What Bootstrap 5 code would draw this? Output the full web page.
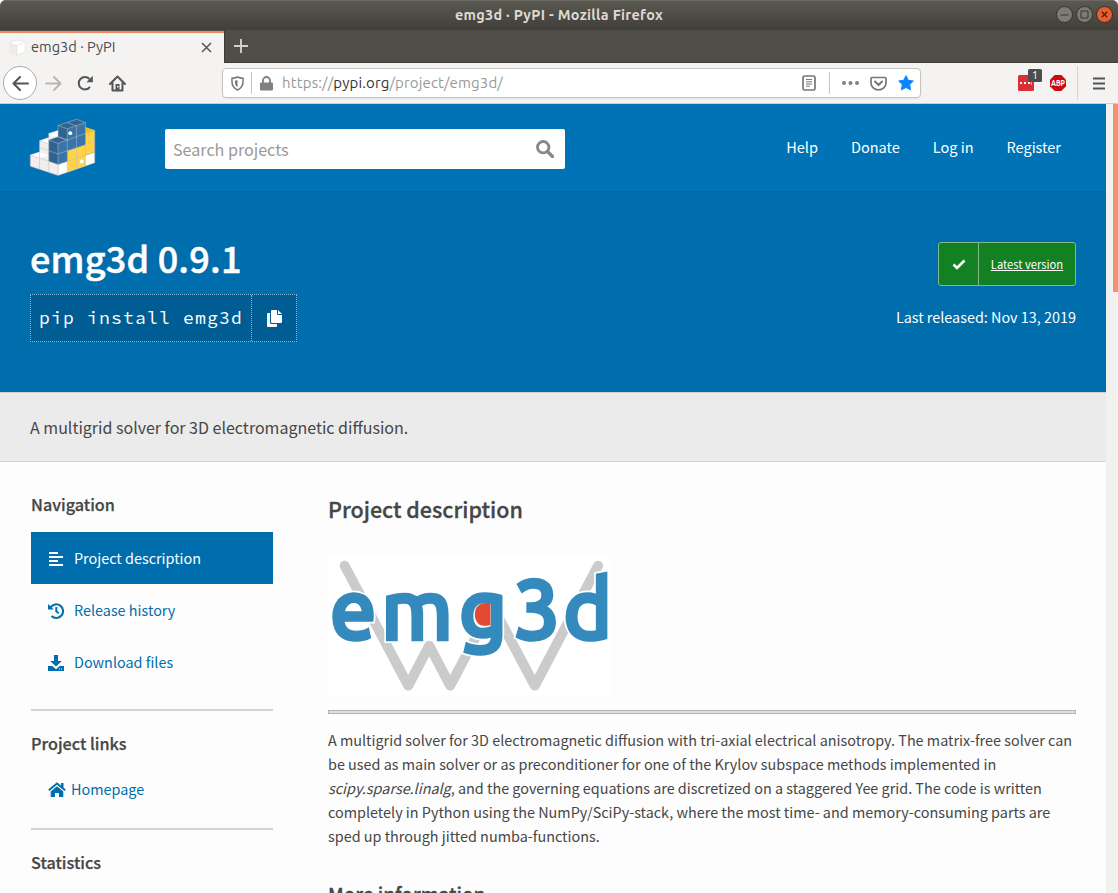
<!DOCTYPE html>
<html lang="en">
<head>
<meta charset="utf-8">
<title>emg3d · PyPI</title>
<meta name="viewport" content="width=device-width, initial-scale=1">
<link href="https://cdn.jsdelivr.net/npm/bootstrap@5.3.0/dist/css/bootstrap.min.css" rel="stylesheet">
<style>
html,body{height:893px;overflow:hidden}
body{width:1118px;background:#fdfdfd;color:#464646;font-family:"Source Sans Pro","Noto Sans CJK SC",sans-serif;font-size:14.4px;line-height:24px}
svg{display:block;flex:none}
a{text-decoration:none}
.chrome{font-family:Ubuntu,"Noto Sans","Open Sans",sans-serif}
.titlebar{height:30px;background:linear-gradient(#5b5a52,#3f3e39);color:#dfdbd2;font-size:14.4px;letter-spacing:.3px;font-weight:700;border-radius:6px 6px 0 0;box-shadow:inset 0 1px #6a685f}
.winbtns{right:5px;top:6px;gap:3px}
.tabs{height:33px;background:#504d46;border-bottom:1px solid #3a3934}
.browser-tab{width:224px;height:33px;background:#f4f3f2;border-top:2px solid #f0885f;margin-top:1px;padding:0 0 2px 9px;color:#4c4c4c;font-size:14.6px}
.newtab{border-left:1px solid #3a3934;padding-left:9px}
.tools{height:41px;background:#f4f3f2;border-bottom:1px solid #d0cecb}
.backbtn{width:34px;height:34px;border:1px solid #adaba8;border-radius:50%;background:#fff;margin-left:3px}
.urlbar{width:699px;height:30px;border:1px solid #c6c3bf;border-radius:4px;background:#fff;margin-left:96px;color:#999;font-size:15px;letter-spacing:.13px;box-shadow:0 1px 2px #0001}
.urlbar b{font-weight:400;color:#333}
.vline{width:1px;height:22px;background:#c4c4c4}
.viewport{height:789px}
.page{width:1106px;overflow:hidden}
.scroller{width:12px;background:#f1f1f0}
.thumb{width:5px;height:188px;background:#f19170;border-radius:0 0 0 1px}
.site-head{height:88px;background:#0073b7;border-bottom:1px solid #0069a6;padding-left:29px}
.searchbox{width:400px;height:40px;background:#fff;border-radius:2px;margin:2px 0 0 69px;padding:0 11px 0 8px;color:#999;font-size:16.1px}
.site-links a{color:#fff}
.site-links{margin:0 45px 2px 0;gap:33px;font-size:14.5px}
.banner{height:200px;background:#006dad;color:#fff;padding:0 30px}
.banner h1{font-size:36px;line-height:44px;font-weight:500;letter-spacing:.2px;-webkit-text-stroke:.5px #fff;margin:43px 0 15px}
.pip{width:267px;height:48px;border:1px dotted #8ab8d6;background:#005d94;font-family:"Source Code Pro","DejaVu Sans Mono",monospace;font-size:18px;letter-spacing:1.2px}
.pip-text{width:221px;border-right:1px dotted #8ab8d6;padding-left:8px}
.latest{width:138px;height:44px;background:#148024;border:1px solid #7fba88;border-radius:3px;margin-top:50px;font-size:11.2px}
.latest span{width:40px;border-right:1px solid #7fba88}
.latest a{color:#fff;text-decoration:underline}
.released{margin-top:19px}
.summary{height:70px;background:#ebebeb;border-top:1px solid #d3d3d3;border-bottom:1px solid #d3d3d3;padding:0 30px;font-size:16px}
.side{width:242px;margin-left:31px}
.side h6{font-size:16.2px;line-height:24px;font-weight:500;margin:0;-webkit-text-stroke:.25px #464646}
.side a{color:#006dad}
.side a svg{margin-top:2px}
.side .tabitem{height:52px;padding:0 0 1px 17px;gap:10px}
.side .tabitem.active{background:#006dad;color:#fff}
.rule{height:2px;background:#d3d3d3}
.main{width:748px;margin-left:55px}
.main h2{font-size:21.5px;line-height:28px;font-weight:500;margin:33px 0 33px;-webkit-text-stroke:.3px #464646}
.dbl{height:4px;border:1px solid #b3b3b3;background:#e0e0e0;margin:14px 0 14px}
</style>
</head>
<body>
<div class="chrome">
  <div class="titlebar position-relative d-flex align-items-center justify-content-center">emg3d · PyPI - Mozilla Firefox
    <div class="winbtns position-absolute d-flex">
      <svg width="17" height="17" viewBox="0 0 17 17"><circle cx="8.5" cy="8.5" r="8" fill="#7d7b74" stroke="#34332f"/><path d="M4.5 9h8" stroke="#383731"/></svg>
      <svg width="17" height="17" viewBox="0 0 17 17"><circle cx="8.5" cy="8.5" r="8" fill="#7d7b74" stroke="#34332f"/><path d="M5 5h7v7H5z" fill="none" stroke="#383731"/></svg>
      <svg width="17" height="17" viewBox="0 0 17 17"><circle cx="8.5" cy="8.5" r="8" fill="#e95e30" stroke="#3f2a22"/><path d="M5.8 5.8l5.4 5.4M11.2 5.8l-5.4 5.4" stroke="#4b2112" stroke-width="1.3"/></svg>
    </div>
  </div>
  <div class="tabs d-flex">
    <div class="browser-tab d-flex align-items-center">
      <svg width="16" height="17" viewBox="0 0 16 17"><path d="M0 4l8-3 8 2v10l-8 3-8-3z" fill="#fff" stroke="#e4e3e0" stroke-width=".7"/><path d="M0 4l8 2.500v9.500l-8-3z" fill="#edecea"/><path d="M0 4l8 2.500 8-3.500M8 6.500v9.500" fill="none" stroke="#deddda" stroke-width=".6"/></svg>
      <span style="margin:0 0 2px 6px">emg3d · PyPI</span>
      <svg class="ms-auto" style="margin-right:12px" width="11" height="11" viewBox="0 0 11 11"><path d="M1 1l9 9M10 1l-9 9" stroke="#555" stroke-width="1.500"/></svg>
    </div>
    <div class="newtab d-flex align-items-center"><svg width="14" height="14" viewBox="0 0 14 14"><path d="M7 0v14M0 7h14" stroke="#d2d0cb" stroke-width="1.900"/></svg></div>
  </div>
  <div class="tools d-flex align-items-center">
    <div class="backbtn d-flex align-items-center justify-content-center"><svg width="17" height="15" viewBox="0 0 17 15"><path d="M8 1L1.500 7.500 8 14M2 7.500h14" fill="none" stroke="#555" stroke-width="2" stroke-linecap="round" stroke-linejoin="round"/></svg></div>
    <svg style="margin-left:8px" width="17" height="15" viewBox="0 0 17 15"><path d="M9 1l6.500 6.500L9 14M15 7.500H1" fill="none" stroke="#b8b7b5" stroke-width="1.900" stroke-linecap="round" stroke-linejoin="round"/></svg>
    <svg style="margin-left:15px" width="17" height="16" viewBox="0 0 17 16"><path d="M13 11.800A6.200 6.200 0 1 1 12.500 4" fill="none" stroke="#555" stroke-width="2"/><path d="M15.800.8v6.400H9.400z" fill="#555"/></svg>
    <svg style="margin-left:15px" width="17" height="17" viewBox="0 0 17 17"><path d="M1 9l7.500-7.500L16 9M3.500 8v7.500h10V8" fill="none" stroke="#555" stroke-width="2" stroke-linejoin="round" stroke-linecap="round"/><path d="M6.500 16V9h4v7z" fill="#555"/><path d="M8 11h1.500v1.500H8z" fill="#f4f3f2"/></svg>
    <div class="urlbar d-flex align-items-center">
      <svg style="margin-left:8px" width="13" height="15" viewBox="0 0 13 15"><path d="M6.500 1C4.500 2 3 2.200 1 2.200V6c0 4 1.500 6 5.500 8 4-2 5.500-4 5.500-8V2.200C10 2.200 8.500 2 6.500 1z" fill="none" stroke="#777" stroke-width="1.500"/><path d="M6.500 4c-1 .4-1.500.5-2.500.6v2c0 2 .8 3.500 2.500 4.700z" fill="#777"/></svg>
      <div class="vline" style="margin-left:7px"></div>
      <svg style="margin-left:8px" width="13" height="15" viewBox="0 0 13 15"><path d="M3 7V4.500a3.500 3.500 0 0 1 7 0V7" fill="none" stroke="#808080" stroke-width="1.800"/><rect y="6.500" width="13" height="8" rx="1.200" fill="#808080"/></svg>
      <span style="margin-left:9px">https://<b>pypi.org</b>/project/emg3d/</span>
      <svg class="ms-auto" width="14" height="16" viewBox="0 0 14 16"><rect x="1" y="1" width="12" height="14" rx="1.500" fill="none" stroke="#777" stroke-width="1.700"/><path d="M4 4.500h6M4 6.800h6M4 9h6M4 11.200h4" stroke="#777"/></svg>
      <div class="vline" style="margin-left:13px"></div>
      <svg style="margin-left:12px" width="17" height="4" viewBox="0 0 17 4" fill="#808080"><circle cx="2" cy="2" r="2"/><circle cx="8.500" cy="2" r="2"/><circle cx="15" cy="2" r="2"/></svg>
      <svg style="margin-left:11px" width="17" height="15" viewBox="0 0 17 15"><path d="M2 1.500h13q1 0 1 1V7a7.500 6.800 0 0 1-15 0V2.500q0-1 1-1z" fill="none" stroke="#777" stroke-width="1.700"/><path d="M5 5.500L8.500 9 12 5.500" fill="none" stroke="#777" stroke-width="2" stroke-linecap="round"/></svg>
      <svg style="margin:0 6px 0 11px" width="16" height="16" viewBox="0 0 16 16"><path d="M8 .7l2.300 4.600 5 .7-3.600 3.600.9 5.200L8 12.500l-4.600 2.300.9-5.200L.7 6l5-.7z" fill="#0a84ff" stroke="#0a84ff" stroke-linejoin="round"/></svg>
    </div>
    <svg style="margin-left:97px" width="25" height="28" viewBox="0 0 25 28"><rect y="6" width="16" height="16" rx="1.500" fill="#d93035"/><path d="M2 14h2M6 14h2M10 14h2" stroke="#fff" stroke-width="2.200"/><path d="M13.500 12v4" stroke="#fff" stroke-opacity=".6"/><rect x="10" y="0" width="14" height="13" rx="1.500" fill="#4d4d4d"/><text x="14" y="10.300" fill="#fff" font-size="10.500">1</text></svg>
    <svg style="margin-left:7px;overflow:visible" width="16" height="16" viewBox="0 0 16 16"><path d="M4.700 0h6.600L16 4.700v6.600L11.300 16H4.700L0 11.300V4.700z" fill="#c70d12"/><text x="1" y="11.200" textLength="14" lengthAdjust="spacingAndGlyphs" fill="#fff" font-size="9" font-weight="700">ABP</text></svg>
    <div class="vline" style="margin-left:11px;height:34px;background:#d6d4d2"></div>
    <svg style="margin-left:15px" width="12" height="13" viewBox="0 0 12 13"><path d="M0 1.500h12M0 6.500h12M0 11.500h12" stroke="#555" stroke-width="1.900"/></svg>
  </div>
</div>

<div class="viewport d-flex">
  <div class="page">
    <header class="site-head d-flex align-items-center">
      <svg width="67" height="59" viewBox="86 42 203 177" stroke-linejoin="round">
        <path d="M90 153l28-9v-34l28-10V88l28-9v136l-84-28z" fill="#f0efed"/>
        <path d="M90 153l28-9 28 10-28 9zM118 110l28-10v20zM146 88l28-9v20l-28-5z" fill="#fff"/>
        <path d="M174 182l111-37v32l-111 38z" fill="#fff"/>
        <path d="M257 69l28 9v67l-28 9v32l-55 19v-65l55-18z" fill="#ffd343"/><path d="M257 69l28 9-28 10z" fill="#f2be22"/>
        <path d="M174 64l56-19 27 10v67l-83 28z" fill="#3775a9"/><path d="M174 64l28 10v34l-28-10zM174 64l56-19 27 10-55 19z" fill="#2f6491"/>
        <path d="M146 108l28-10 28 10v64l-28 10-28-10z" fill="#3775a9"/><path d="M146 108l28-10 28 10-28 10v64l-28-10z" fill="#2f6491"/>
        <path d="M90 153v34l84 28 111-38M90 153l84 29 111-37M90 153l28-9M118 144v52M118 110v34M118 110l28 10M118 131l56 19 111-38M146 88v117M174 79l-28 9M118 110l28-10M146 108l28 10 28-10M146 108l28-10 28 10M174 118v97M174 98V64l28 10 55-19M174 64l56-19 27 10v131M202 74v131M202 108l55-20 28-10M230 65v131M202 55l28 10M285 78v99M202 108l-28-10" fill="none" stroke="#bdb9c4" stroke-width="2.200" stroke-opacity=".7"/>
        <circle cx="211" cy="87" r="6" fill="#fff"/><circle cx="246" cy="173" r="6" fill="#fff"/>
      </svg>
      <div class="searchbox d-flex align-items-center justify-content-between"><span>Search projects</span>
        <svg width="18" height="18" viewBox="0 0 18 18"><circle cx="7.200" cy="7.200" r="5.700" fill="none" stroke="#888" stroke-width="2.900"/><path d="M11.500 11.500l5 5" stroke="#888" stroke-width="3.400" stroke-linecap="round"/></svg></div>
      <nav class="site-links ms-auto d-flex"><a href="#">Help</a><a href="#">Donate</a><a href="#">Log in</a><a href="#">Register</a></nav>
    </header>
    <section class="banner d-flex justify-content-between">
      <div>
        <h1>emg3d 0.9.1</h1>
        <div class="pip d-flex"><div class="pip-text d-flex align-items-center text-nowrap">pip install emg3d</div>
          <div class="flex-grow-1 d-flex align-items-center justify-content-center"><svg width="15" height="17" viewBox="0 0 15 17" fill="#fff"><path d="M0 4q0-1 1-1h2v9.500q0 1.500 1.500 1.500H10v2q0 1-1 1H1q-1 0-1-1zM5 0h5v4q0 1 1 1h4v7q0 1-1 1H5q-1 0-1-1V1q0-1 1-1zM11 0l4 4h-4z"/></svg></div></div>
      </div>
      <div class="d-flex flex-column align-items-end">
        <div class="latest d-flex"><span class="d-flex align-items-center justify-content-center"><svg width="14" height="11" viewBox="0 0 14 11"><path d="M1.500 5.500L5 9l7.500-7.500" fill="none" stroke="#fff" stroke-width="2.600"/></svg></span><a href="#" class="flex-grow-1 d-flex align-items-center justify-content-center">Latest version</a></div>
        <div class="released">Last released: Nov 13, 2019</div>
      </div>
    </section>
    <section class="summary d-flex align-items-center">A multigrid solver for 3D electromagnetic diffusion.</section>
    <div class="d-flex">
      <aside class="side">
        <h6 style="margin:30px 0 16px">Navigation</h6>
        <a href="#" class="tabitem active d-flex align-items-center"><svg width="16" height="16" viewBox="0 0 16 16"><path d="M1 2h9M1 6h14M1 10h9M1 14h14" stroke="#fff" stroke-width="2"/></svg>Project description</a>
        <a href="#" class="tabitem d-flex align-items-center"><svg width="16" height="16" viewBox="0 0 16 16"><path d="M2.500 4.500A6.800 6.800 0 1 1 3.500 13" fill="none" stroke="#006dad" stroke-width="2.100"/><path d="M0 1v5.500h5.800z" fill="#006dad"/><path d="M8.300 4v4.500l2.500 1.800" fill="none" stroke="#006dad" stroke-width="1.900"/></svg>Release history</a>
        <a href="#" class="tabitem d-flex align-items-center"><svg width="16" height="16" viewBox="0 0 16 16" fill="#006dad"><path d="M6 0h4v6h3.800L8 11.500 2.200 6H6zM0 11h4.300L8 14.300 11.700 11H16v5H0z"/><path d="M11 13.500h1v1h-1zM13 13.500h1v1h-1z" fill="#fff"/></svg>Download files</a>
        <div class="rule" style="margin:21px 0 20px"></div>
        <h6>Project links</h6>
        <a href="#" class="d-flex align-items-center" style="padding-left:17px;gap:5px;margin-top:22px"><svg width="18" height="16" viewBox="0 0 18 16"><path d="M.8 8.200L9 1.500l8.200 6.700" fill="none" stroke="#006dad" stroke-width="1.900"/><path d="M13 1h2.500v5L13 4zM9 4.200l6.300 5.200V15H11v-4H7v4H2.700V9.400z" fill="#006dad"/></svg>Homepage</a>
        <div class="rule" style="margin:27px 0 20px"></div>
        <h6>Statistics</h6>
      </aside>
      <main class="main">
        <h2>Project description</h2>
        <svg width="283" height="140" viewBox="30 48 850 420" font-family="Ubuntu,'Noto Sans',sans-serif" font-size="244">
          <defs><clipPath id="edge"><path d="M30 48h840v420H30z"/></clipPath></defs>
          <path d="M30 48h850v417H30z" fill="#fff"/>
          <path d="M80 77l191 360 63-120 63 120 127-239 127 239L841 77" fill="none" stroke="#cbcbcb" stroke-width="30" stroke-linecap="round" stroke-linejoin="round"/>
          <g clip-path="url(#edge)">
            <text y="293" x="38 192 426 588 739" fill="#fff" stroke="#fff" stroke-width="27" aria-hidden="true">emg3d</text>
            <path d="M518 188v68q-47 8-47-34 0-36 47-34z" fill="#e24a33"/>
            <text y="293" x="38 192 426 588 739" fill="#348abd" stroke="#348abd" stroke-width="17">emg3d</text>
          </g>
        </svg>
        <div class="dbl"></div>
        <p style="margin-bottom:32px">A multigrid solver for 3D electromagnetic diffusion with tri-axial electrical anisotropy. The matrix-free solver can<br>be used as main solver or as preconditioner for one of the Krylov subspace methods implemented in<br><em>scipy.sparse.linalg</em>, and the governing equations are discretized on a staggered Yee grid. The code is written<br>completely in Python using the NumPy/SciPy-stack, where the most time- and memory-consuming parts are<br>sped up through jitted numba-functions.</p>
        <h2 class="m-0" style="font-size:18.900px">More information</h2>
      </main>
    </div>
  </div>
  <div class="scroller d-flex justify-content-end"><div class="thumb"></div></div>
</div>
<script src="https://cdn.jsdelivr.net/npm/bootstrap@5.3.0/dist/js/bootstrap.bundle.min.js"></script>
</body>
</html>
